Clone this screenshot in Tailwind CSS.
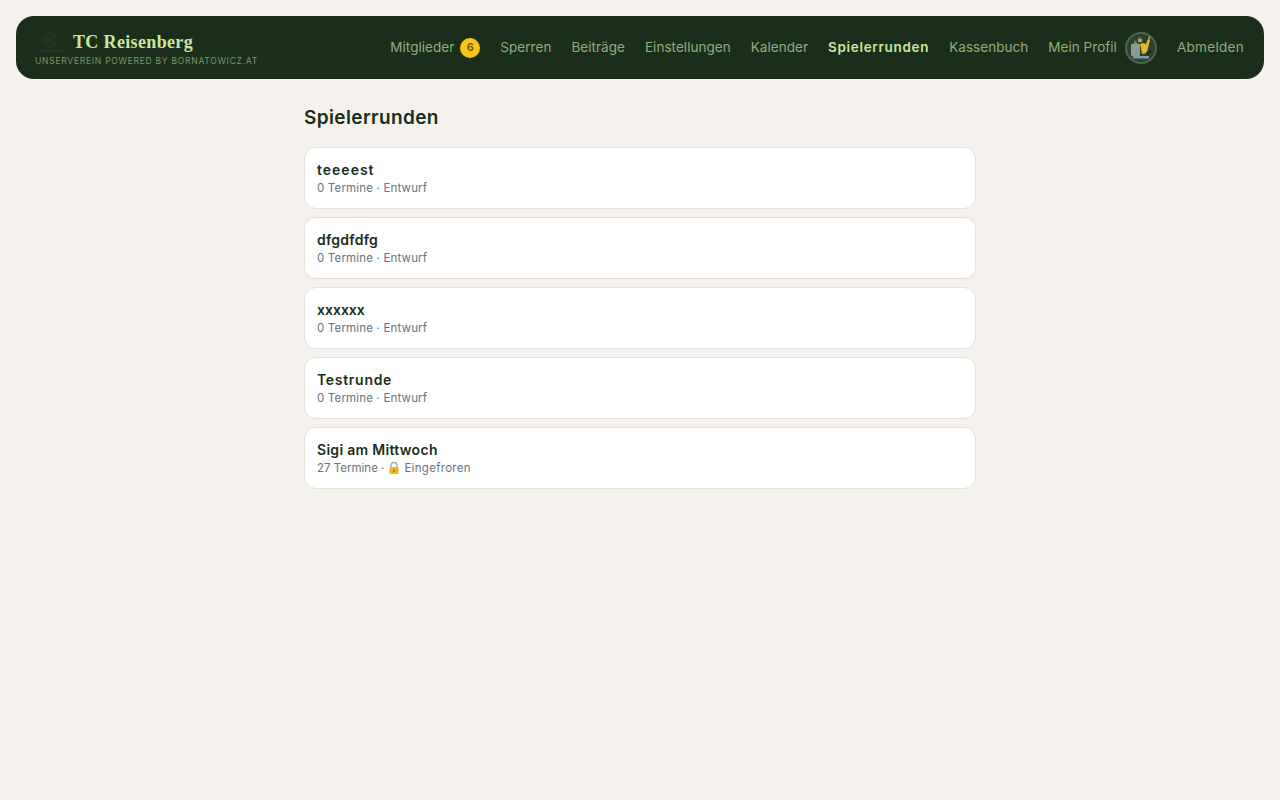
<!doctype html>
<html lang="de">
<head>
<meta charset="utf-8">
<title>Spielerrunden</title>
<script src="https://cdn.jsdelivr.net/npm/@tailwindcss/browser@4"></script>
</head>
<body class="min-h-[800px] bg-[#f5f2ed] font-['Inter','Noto_Sans',sans-serif] text-[#1a2e1a]">
  <div class="p-4 pb-0">
    <nav class="h-[63px] rounded-[18px] bg-[#1a2e1a] pl-5 pr-5 flex items-center justify-between">
      <div class="w-[224px] pt-[1px]">
        <div class="flex items-center gap-[9px] h-[24px]">
          <svg class="w-7 h-7 shrink-0 mt-[5px]" viewBox="0 0 28 28" fill="none" stroke="#263826" stroke-width="1">
            <circle cx="14" cy="10" r="7"/>
            <path d="M6 10h16M14 3v14M8 6l12 8M20 6L8 14"/>
            <path d="M1 21h26" stroke-width="2.5" stroke-dasharray="2 1"/>
          </svg>
          <span class="font-['Liberation_Serif',serif] font-bold text-[18px] leading-6 text-[#c8e6a0] tracking-[0.35px]">TC Reisenberg</span>
        </div>
        <p class="mt-[1px] -ml-[1px] text-[8.5px] leading-3 tracking-[0.74px] uppercase text-[#7a9a6a] whitespace-nowrap">Unserverein powered by bornatowicz.at</p>
      </div>
      <div class="flex items-center gap-5 text-[13.5px] tracking-[0.04px] text-[#8fae7e]">
        <a class="flex items-center gap-[6px]">Mitglieder <span class="w-5 h-5 rounded-full bg-[#f5c518] text-[#7a4a00] text-[11px] font-semibold flex items-center justify-center">6</span></a>
        <a>Sperren</a>
        <a>Beiträge</a>
        <a>Einstellungen</a>
        <a>Kalender</a>
        <a class="font-semibold text-[#c8e6a0] tracking-[0.68px]">Spielerrunden</a>
        <a>Kassenbuch</a>
        <a class="flex items-center gap-2">Mein Profil
          <svg class="w-8 h-8" viewBox="0 0 32 32">
            <circle cx="16" cy="16" r="15" fill="#2c4033" stroke="#4a6a42" stroke-width="2"/>
            <rect x="6" y="12" width="9" height="12" rx="1" fill="#8f9a94"/>
            <path d="M8 12l2-4 3 4z" fill="#5f9a5a"/>
            <circle cx="15" cy="8" r="2.4" fill="#c98f62"/>
            <path d="M13 7l4-2v2z" fill="#6a4a2a"/>
            <path d="M15 12l3-1 3 1 2-5 2 1-2 8-1 5-5 1-1-6z" fill="#e2b92a"/>
            <path d="M23 7l1-3 1.5 .5-.5 3z" fill="#c98f62"/>
            <path d="M8 24h16v2.5H8z" fill="#7aa0a8"/>
            <path d="M21 20l5-2 .6 2-4 3z" fill="#22261e"/>
          </svg>
        </a>
        <a class="tracking-[0.3px]">Abmelden</a>
      </div>
    </nav>
  </div>
  <main class="w-[672px] mx-auto pt-[25px]">
    <h1 class="text-[19px] leading-7 font-semibold mb-[15px] tracking-[0.38px]">Spielerrunden</h1>
    <div class="flex flex-col gap-2">
      <article class="h-[62px] bg-white rounded-xl border border-[#e5e2dd] px-3 pt-3">
        <p class="text-[14px] leading-5 font-semibold tracking-[1px]">teeeest</p>
        <p class="text-[11.5px] leading-4 tracking-[0.17px] text-[#6b7280]">0 Termine · Entwurf</p>
      </article>
      <article class="h-[62px] bg-white rounded-xl border border-[#e5e2dd] px-3 pt-3">
        <p class="text-[14px] leading-5 font-semibold tracking-[0.25px]">dfgdfdfg</p>
        <p class="text-[11.5px] leading-4 tracking-[0.17px] text-[#6b7280]">0 Termine · Entwurf</p>
      </article>
      <article class="h-[62px] bg-white rounded-xl border border-[#e5e2dd] px-3 pt-3">
        <p class="text-[14px] leading-5 font-semibold">xxxxxx</p>
        <p class="text-[11.5px] leading-4 tracking-[0.17px] text-[#6b7280]">0 Termine · Entwurf</p>
      </article>
      <article class="h-[62px] bg-white rounded-xl border border-[#e5e2dd] px-3 pt-3">
        <p class="text-[14px] leading-5 font-semibold tracking-[0.7px]">Testrunde</p>
        <p class="text-[11.5px] leading-4 tracking-[0.17px] text-[#6b7280]">0 Termine · Entwurf</p>
      </article>
      <article class="h-[62px] bg-white rounded-xl border border-[#e5e2dd] px-3 pt-3">
        <p class="text-[14px] leading-5 font-semibold tracking-[0.3px]">Sigi am Mittwoch</p>
        <p class="text-[11.5px] leading-4 text-[#6b7280] flex items-center gap-[3px]">27 Termine ·
          <svg class="w-[14px] h-[14px]" viewBox="0 0 14 14"><path d="M4 7V4.5a3 3 0 0 1 6 0V7" fill="none" stroke="#a8a8a8" stroke-width="1.4"/><rect x="2.5" y="6" width="9" height="7" rx="1.2" fill="#f0b429"/><rect x="6.3" y="8.5" width="1.4" height="2.4" fill="#a86a10"/></svg>
          <span class="tracking-[0.3px]">Eingefroren</span></p>
      </article>
    </div>
  </main>
</body>
</html>
